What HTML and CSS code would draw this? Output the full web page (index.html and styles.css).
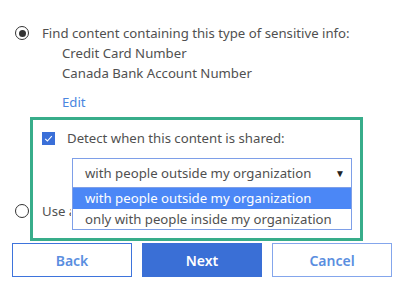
FILE: index.html
```html
<!DOCTYPE html>
<html>
<head>
<meta charset="utf-8">
<link rel="stylesheet" href="styles.css">
</head>
<body>
<div class="main">
  <div class="radio-row">
    <span class="radio checked"></span>
    <span class="label">Find content containing this type of sensitive info:</span>
  </div>
  <div class="types">
    <div class="type">Credit Card Number</div>
    <div class="type">Canada Bank Account Number</div>
    <a class="edit">Edit</a>
  </div>
  <div class="detect">
    <div class="check-row">
      <span class="checkbox"><svg width="13" height="13" viewBox="0 0 13 13"><path d="M3.2 6.8 L5.4 9 L9.8 4.2" fill="none" stroke="#fff" stroke-width="1.1"/></svg></span>
      <span class="label">Detect when this content is shared:</span>
    </div>
    <div class="select">
      <span class="select-text">with people outside my organization</span>
      <span class="arrow">▼</span>
      <div class="options">
        <div class="option selected">with people outside my organization</div>
        <div class="option">only with people inside my organization</div>
      </div>
    </div>
  </div>
  <div class="radio-row second">
    <span class="radio"></span>
    <span class="label clipped">Use a</span>
  </div>
  <div class="buttons">
    <button class="btn back">Back</button>
    <button class="btn next">Next</button>
    <button class="btn cancel">Cancel</button>
  </div>
</div>
</body>
</html>
```
FILE: styles.css
```css
html, body {
  margin: 0;
  padding: 0;
  background: #fff;
}
body {
  width: 411px;
  height: 289px;
  overflow: hidden;
  font-family: "Noto Sans", "Open Sans", sans-serif;
  font-size: 13.2px;
  color: #505050;
}
.main {
  padding-top: 23px;
}
.radio-row {
  display: flex;
  align-items: center;
  height: 20px;
  line-height: 20px;
  padding-left: 15px;
}
.radio {
  width: 12px;
  height: 12px;
  border: 1.5px solid #333;
  border-radius: 50%;
  display: flex;
  align-items: center;
  justify-content: center;
  margin-right: 13px;
  flex: none;
}
.radio.checked::after {
  content: "";
  width: 7px;
  height: 7px;
  border-radius: 50%;
  background: #333;
}
.label {
  white-space: nowrap;
}
.label.clipped {
  width: 29px;
  overflow: hidden;
}
.types {
  padding-left: 62px;
  line-height: 20px;
}
.type {
  height: 20px;
}
.edit {
  display: block;
  margin-top: 9px;
  color: #4a86e0;
  height: 20px;
}
.detect {
  position: relative;
  margin-top: 16px;
  margin-left: 42px;
  width: 310px;
}
.detect::after {
  content: "";
  position: absolute;
  left: -12px;
  top: -11px;
  width: 327px;
  height: 118px;
  border: 3px solid #38ad8a;
  pointer-events: none;
}
.check-row {
  display: flex;
  align-items: center;
  height: 20px;
  line-height: 20px;
}
.checkbox {
  width: 13px;
  height: 13px;
  background: #3a6fd8;
  margin-right: 12px;
  flex: none;
  display: block;
}
.checkbox svg {
  display: block;
}
.select {
  position: relative;
  margin-top: 10px;
  margin-left: 30px;
  height: 28px;
  border: 1px solid #7e9fe8;
  display: flex;
  align-items: center;
  padding-left: 12px;
  width: 266px;
}
.select-text {
  flex: 1;
  white-space: nowrap;
}
.arrow {
  font-size: 10px;
  color: #222;
  margin-right: 6px;
}
.options {
  position: absolute;
  left: -1px;
  top: 29px;
  width: 278px;
  border: 1px solid #7e9fe8;
  border-top: none;
  background: #fff;
  z-index: 2;
}
.option {
  height: 20px;
  line-height: 20px;
  padding-left: 12px;
  white-space: nowrap;
}
.option.selected {
  background: #4b87f6;
  color: #fff;
  height: 21px;
  line-height: 21px;
}
.radio-row.second {
  margin-top: 13px;
}
.buttons {
  display: flex;
  gap: 10px;
  margin-top: 22px;
  padding-left: 12px;
}
.btn {
  width: 120px;
  height: 34px;
  font-family: "Noto Sans", "Open Sans", sans-serif;
  font-size: 14px;
  font-weight: 600;
  background: #fff;
  color: #5a8ee0;
  border: 1.5px solid #3e74dc;
  padding: 0;
}
.btn.next {
  background: #3a6fd6;
  color: #fff;
  border-color: #3a6fd6;
}
.btn.cancel {
  border: 1.5px solid #84a6ec;
}
```
